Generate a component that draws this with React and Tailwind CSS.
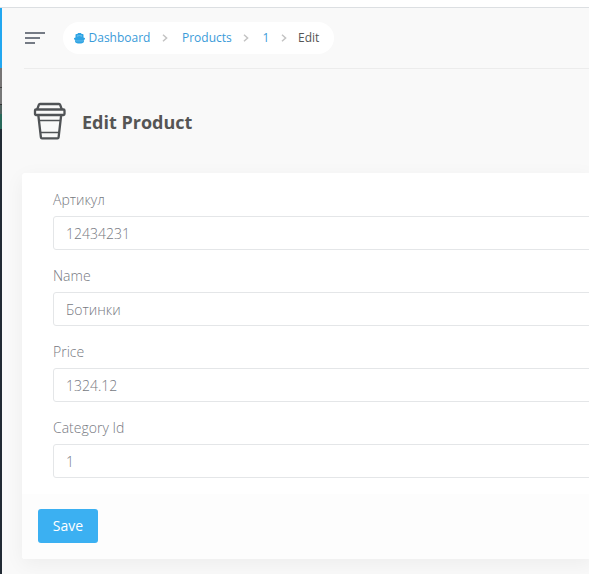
const fields = [
  { label: 'Артикул', value: '12434231' },
  { label: 'Name', value: 'Ботинки' },
  { label: 'Price', value: '1324.12' },
  { label: 'Category Id', value: '1' },
];

function BoatIcon() {
  return (
    <svg className="mr-[3px] h-[11px] w-[11px]" viewBox="0 0 11 11" fill="#2fa4e4">
      <path d="M3.7 0h3.6v1h1.4c.5 0 .8.3.8.8v2.600l1.300.5c.2.100.300.300.200.500-.300.900-.700 1.600-1.300 2.300H1.300C.700 7 .300 6.300 0 5.400c-.1-.2 0-.4.2-.5l1.300-.5V1.800c0-.5.3-.8.8-.8h1.400z" />
      <path d="M1 7.500h9v1.400c-.7.900-1.700 1.500-2.900 1.700H3.900C2.700 10.400 1.700 9.800 1 8.900z" />
      <path d="M3 2.400h5v1.200L5.500 2.900 3 3.600z" fill="#fff" fillOpacity=".45" />
      <path d="M1 8.300h9" stroke="#fff" strokeOpacity=".25" strokeWidth=".5" />
    </svg>
  );
}

function Chevron({ className }) {
  return (
    <svg className={`h-[8px] w-[6px] ${className}`} viewBox="0 0 6 8" fill="none">
      <path d="M1 .8 4.600 4 1 7.200" stroke="#c3c3c3" strokeWidth="1.500" />
    </svg>
  );
}

function CupIcon() {
  return (
    <svg className="h-[38px] w-[34px]" viewBox="0 0 34 38" fill="none" stroke="#505356" strokeWidth="2.300" strokeLinejoin="round">
      <path d="M4.200 7.500 5.800 2.900c.2-.6.600-.9 1.200-.9h19c.6 0 1 .3 1.200.9L28.800 7.500" />
      <rect x="2" y="7.500" width="29.500" height="5.500" rx="1" />
      <path d="M5.300 13 7.900 35.300c.1.700.500 1 1.100 1h15.500c.6 0 1-.3 1.100-1L28.200 13" />
      <path d="M6 18.500h21.500M7.500 30.500h18.500" strokeWidth="1.400" />
    </svg>
  );
}

function Header() {
  return (
    <header className="ml-[22px] flex h-[61px] items-start border-b border-[#ececec] pt-[14px]">
      <div className="ml-px mt-[10px] flex w-5 flex-col gap-[3px]">
        <span className="h-[2px] w-5 bg-[#757b85]" />
        <span className="h-[2px] w-[15px] bg-[#757b85]" />
        <span className="h-[2px] w-[10px] bg-[#757b85]" />
      </div>
      <nav className="ml-[18px] flex h-8 w-[271px] items-center rounded-full bg-white pl-[11px] text-[12px] text-[#3a9bd9]">
        <BoatIcon />
        <span className="ml-[0.5px] w-[62px]">Dashboard</span>
        <Chevron className="ml-[11.5px]" />
        <span className="ml-[14px] w-[50px]">Products</span>
        <Chevron className="ml-[11px]" />
        <span className="ml-[13.5px] w-[7px]">1</span>
        <Chevron className="ml-[11px]" />
        <span className="ml-[11.500px] text-[#555]">Edit</span>
      </nav>
    </header>
  );
}

export default function App() {
  return (
    <div className="flex h-[574px] w-[589px] flex-col overflow-hidden bg-white font-['Open_Sans','Noto_Sans',sans-serif]">
      <div className="h-2 shrink-0 border-b border-[#dcdfe2] bg-white" />
      <div className="flex min-h-0 flex-1">
        <aside className="flex w-[2px] shrink-0 flex-col bg-[#222b35]">
          <div className="h-[60px] bg-[#22a7f0]" />
          <div className="h-[19px] bg-[#777575]" />
          <div className="h-px bg-[#444]" />
          <div className="h-4 bg-[#777878]" />
          <div className="h-px bg-[#333]" />
          <div className="h-[9px] bg-[#526260]" />
          <div className="h-[15px] bg-[#28695a]" />
        </aside>
        <main className="min-w-0 flex-1 bg-[#f9f9f9]">
          <Header />
          <h1 className="flex h-[104px] items-center pl-[31px] text-[18px] font-bold text-[#555]">
            <CupIcon />
            <span className="ml-[15px] pt-[2px]">Edit Product</span>
          </h1>
          <form className="-mr-1 ml-5 h-[386px] rounded-[3px] bg-white shadow-[0_5px_20px_rgba(0,0,0,0.05)]">
            <div className="h-[321px] pl-[31px] pt-[17px]">
              {fields.map(({ label, value }) => (
                <div key={label} className="h-[76px]">
                  <label className="block h-[26px] text-[14px] font-light leading-5 text-[#76797f]">{label}</label>
                  <div className="h-[34px] rounded-l-[3px] border border-[#e4e6e8] bg-white pl-3 text-[14px] font-light leading-[34px] text-[#76797f]">
                    {value}
                  </div>
                </div>
              ))}
            </div>
            <div className="h-[65px] rounded-b-[3px] bg-[#fdfdfd] pl-4 pt-[15px]">
              <button type="button" className="h-[34px] w-[60px] rounded-[3px] bg-[#3bb0f2] pb-[2px] text-[14px] text-white">
                Save
              </button>
            </div>
          </form>
        </main>
      </div>
    </div>
  );
}
